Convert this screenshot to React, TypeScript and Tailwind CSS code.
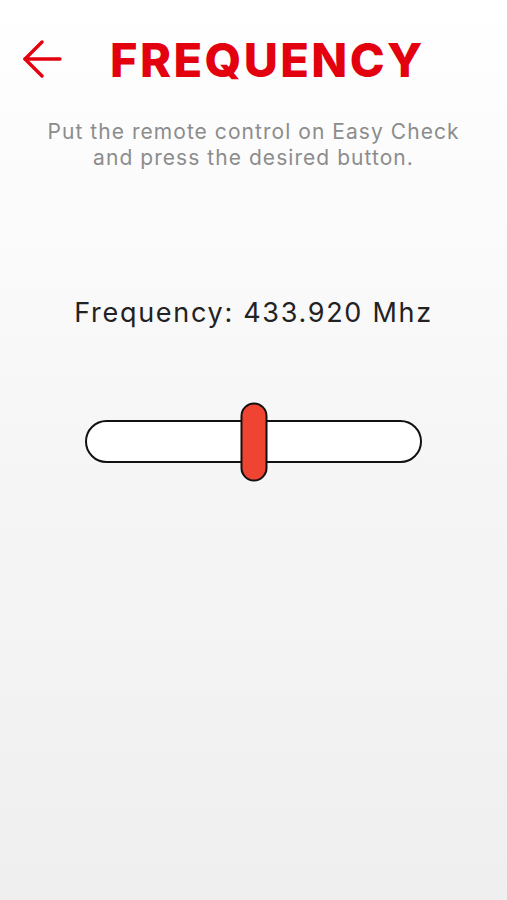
import React from 'react';

const BackArrow: React.FC = () => (
  <svg width="40" height="38" viewBox="0 0 40 38" fill="none" stroke="#e3000f" strokeWidth="3.4" strokeLinecap="round" strokeLinejoin="round">
    <path d="M38 19H3" />
    <path d="M20 2L3 19l17 17" />
  </svg>
);

export default function App() {
  const value = 0.5; // thumb position along the track

  return (
    <div
      className="w-[507px] h-[900px] flex flex-col bg-gradient-to-b from-white via-[#f6f6f6] to-[#efefef]"
      style={{ fontFamily: 'Inter, "Open Sans", sans-serif' }}
    >
      {/* Header */}
      <div className="flex items-center h-[74px] mt-[22px] pl-[22px]">
        <button className="flex items-center justify-center">
          <BackArrow />
        </button>
        <h1 className="ml-[48px] text-[47px] leading-none font-extrabold tracking-[2.4px] text-[#e3000f]">
          FREQUENCY
        </h1>
      </div>

      {/* Instructions */}
      <p className="mt-[23px] text-center text-[21px] leading-[26px] tracking-[1.05px] text-[#8c8c8c]">
        Put the remote control on Easy Check
        <br />
        and press the desired button.
      </p>

      {/* Frequency readout */}
      <div className="mt-[126px] text-center text-[27px] leading-[32px] tracking-[1.7px] text-[#222]">
        Frequency: 433.920 Mhz
      </div>

      {/* Slider */}
      <div className="mt-[91px] flex justify-center">
        <div className="relative w-[337px] h-[43px] rounded-full border-[2.5px] border-[#111] bg-white">
          <div
            className="absolute top-1/2 -translate-y-1/2 -translate-x-1/2 w-[27px] h-[79px] rounded-full border-2 border-[#111] bg-[#f04433]"
            style={{ left: `${value * 100}%` }}
          />
        </div>
      </div>
    </div>
  );
}
